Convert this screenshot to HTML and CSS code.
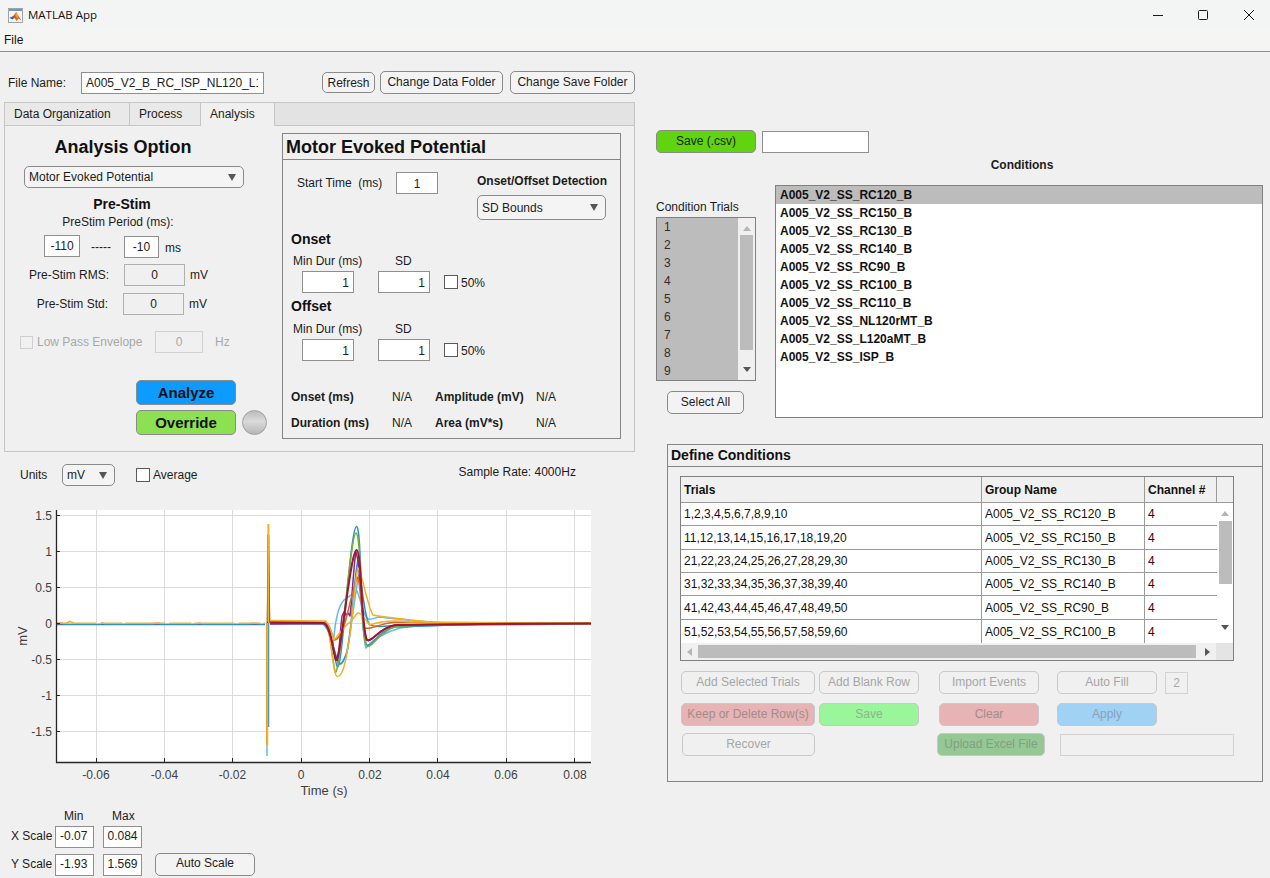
FILE: index.html
```html
<!DOCTYPE html>
<html lang="en">
<head>
<meta charset="utf-8">
<title>MATLAB App</title>
<link rel="stylesheet" href="styles.css">
</head>
<body>
<header class="titlebar">
  <svg class="app-icon" viewBox="0 0 15 15" aria-hidden="true">
    <rect x="0.5" y="0.5" width="14" height="14" fill="#f6f6f6" stroke="#a3a3a3"/>
    <rect x="1" y="1" width="13" height="2" fill="#6f97c2"/>
    <path d="M1.5 10 L5 8.2 L8.2 4 L10.5 8 L13.5 12.5 L10.5 10.6 L8.5 13 L6.5 9.8 Z" fill="#d9641e"/>
    <path d="M1.5 10 L5 8.2 L7 9.6 L4.6 11.4 Z" fill="#2f6fb5"/>
    <path d="M8.2 4 L10.5 8 L9.2 10.5 L7.4 7 Z" fill="#f2a33a"/>
  </svg>
  <span class="app-title">MATLAB App</span>
  <div class="win-controls">
    <svg class="win-min" viewBox="0 0 10 10" aria-hidden="true"><path d="M0 5.5H10" stroke="#1a1a1a" fill="none"/></svg>
    <svg class="win-max" viewBox="0 0 10 10" aria-hidden="true"><rect x="0.5" y="0.5" width="9" height="9" rx="1" stroke="#1a1a1a" fill="none"/></svg>
    <svg class="win-close" viewBox="0 0 10 10" aria-hidden="true"><path d="M0 0L10 10M10 0L0 10" stroke="#1a1a1a" fill="none"/></svg>
  </div>
</header>
<nav class="menubar"><span>File</span></nav>

<main class="main">
  <section class="left">
    <div class="file-row">
      <span class="file-label">File Name:</span>
      <div class="field file-field"><span class="clip">A005_V2_B_RC_ISP_NL120_L1</span></div>
      <button class="btn refresh">Refresh</button>
      <button class="btn lift data-folder">Change Data Folder</button>
      <button class="btn lift save-folder">Change Save Folder</button>
    </div>

    <div class="tabs">
      <div class="tab-strip">
        <span class="tab tab-data">Data Organization</span>
        <span class="tab tab-process">Process</span>
        <span class="tab tab-analysis">Analysis</span>
      </div>
      <div class="tab-body">
        <div class="analysis">
          <h2 class="analysis-title">Analysis Option</h2>
          <div class="select analysis-select"><span>Motor Evoked Potential</span><i class="caret"></i></div>
          <h3 class="prestim-title">Pre-Stim</h3>
          <div class="prestim-sub">PreStim Period (ms):</div>
          <div class="period-row">
            <div class="field center period-a">-110</div>
            <span class="dashes">-----</span>
            <div class="field center period-b">-10</div>
            <span class="unit-ms">ms</span>
          </div>
          <div class="stat-row rms-row">
            <span class="stat-label rms-label">Pre-Stim RMS:</span>
            <div class="field center muted stat-field">0</div>
            <span class="stat-unit">mV</span>
          </div>
          <div class="stat-row std-row">
            <span class="stat-label std-label">Pre-Stim Std:</span>
            <div class="field center muted stat-field">0</div>
            <span class="stat-unit">mV</span>
          </div>
          <div class="lowpass-row">
            <span class="check check-off"></span>
            <span class="lowpass-label">Low Pass Envelope</span>
            <div class="field center off lowpass-field">0</div>
            <span class="lowpass-unit">Hz</span>
          </div>
          <button class="btn action analyze">Analyze</button>
          <div class="override-row">
            <button class="btn action override">Override</button>
            <span class="lamp"></span>
          </div>
        </div>

        <div class="mep">
          <h2 class="mep-title">Motor Evoked Potential</h2>
          <div class="mep-top">
            <div class="start-col">
              <span class="start-label">Start Time&nbsp; (ms)</span>
              <div class="field center start-field">1</div>
            </div>
            <div class="detect-col">
              <div class="detect-label">Onset/Offset Detection</div>
              <div class="select detect-select"><span>SD Bounds</span><i class="caret"></i></div>
            </div>
          </div>
          <h3 class="block-title onset-title">Onset</h3>
          <div class="dur-labels onset-labels"><span class="dur-label">Min Dur (ms)</span><span>SD</span></div>
          <div class="dur-row">
            <div class="field num dur-field">1</div>
            <div class="field num sd-field">1</div>
            <span class="check pct-check"></span><span class="pct">50%</span>
          </div>
          <h3 class="block-title offset-title">Offset</h3>
          <div class="dur-labels offset-labels"><span class="dur-label">Min Dur (ms)</span><span>SD</span></div>
          <div class="dur-row">
            <div class="field num dur-field">1</div>
            <div class="field num sd-field">1</div>
            <span class="check pct-check"></span><span class="pct">50%</span>
          </div>
          <div class="results">
            <b>Onset (ms)</b><span>N/A</span><b>Amplitude (mV)</b><span>N/A</span>
            <b>Duration (ms)</b><span>N/A</span><b>Area (mV*s)</b><span>N/A</span>
          </div>
        </div>
      </div>
    </div>

    <div class="units-row">
      <span class="units-label">Units</span>
      <div class="select units-select"><span>mV</span><i class="caret"></i></div>
      <span class="check avg-check"></span><span class="avg-label">Average</span>
      <span class="rate">Sample Rate: 4000Hz</span>
    </div>

    <svg class="plot" viewBox="0 500 640 300" role="img" aria-label="Voltage against time plot">
      <rect x="56" y="510" width="535" height="252" fill="#fff"/>
      <g class="grid-lines">
        <path d="M96.5 510V762M164.5 510V762M232.5 510V762M301.5 510V762M369.5 510V762M437.5 510V762M506.5 510V762M574.5 510V762"/>
        <path d="M56 515.5H591M56 551.5H591M56 587.5H591M56 623.5H591M56 659.5H591M56 695.5H591M56 731.5H591"/>
      </g>
      <g class="traces">
        <path class="c-blue" d="M57 624.5H265"/>
        <path class="c-red dash-a" d="M57 623.6H265"/>
        <path class="c-yellow dash-b" d="M57 623.2H66L70 621.5L74 623.2H265"/>
        <path class="c-sky" d="M267 623V756"/>
        <path class="c-blue" d="M268.5 623V727"/>
        <path class="c-green" d="M267.5 623L268 535L269.5 623"/>
        <path class="c-red" d="M267.5 623L268.5 535L269.5 622"/>
        <path class="c-orange thick" d="M267 623V745"/>
        <path class="c-yellow thick" d="M267.2 623V745M268.4 524V622"/>

        <path class="c-sky" d="M270 623L322 624C328 625 331 640 333 645C335 625 337 607 344 600C348 596 353 595 357 591C361 600 363 616 368 619C372 620 376 617 380 617C395 619 420 622 470 624L591 623.5"/>
        <path class="c-sky" d="M270 624L322 624C330 626 333 648 337 660C340 668 343 662 346 655C351 635 355 590 359 575C362 600 362 635 366 648C372 640 385 632 400 628C420 625 450 625 591 624"/>
        <path class="c-blue" d="M270 622.5L322 622.5C330 623 332 650 337 666C342 680 350 527 356.5 526.5C362 526 360 640 367 645C372 648 378 630 395 627L480 624L591 623.5"/>
        <path class="c-blue" d="M270 623L323 623C330 626 332 645 338 662C341 668 344 660 347 652C352 630 354 575 358 560C362 585 364 615 369 624C374 628 385 626 400 625L591 624"/>
        <path class="c-green" d="M270 622L323 622C330 623 331 650 335 672C340 680 350 534 356 533C362 534 360 640 367 646C372 649 380 630 397 626L480 624L591 623"/>
        <path class="c-purple" d="M270 624L324 623.5C330 626 332 645 336 660C339 664 340 630 342 616L344 612L346 615L348 613L350 616C352 600 354 560 356 552C360 560 362 630 367 640C372 643 378 628 395 625L591 623.5"/>
        <path class="c-orange" d="M270 621.5L325 622C330 624 331 632 334 640C338 640 343 632 347 615C351 600 355 580 358 577C361 590 362 620 365 628C370 630 378 624 395 622L450 623L591 623.5"/>
        <path class="c-yellow" d="M270 620.5L326 621C330 628 331 655 335 672C336 678 339 678 342 672C346 665 347 650 350 635C353 610 356 572 358 568C362 572 367 605 373 615C380 617 392 617 410 620L440 623L591 623.5"/>
        <path class="c-yellow" d="M270 622L326 622C330 626 332 634 334 640C339 634 345 626 350 622C354 618 356 614 358 613C362 612 366 622 370 625C378 622 392 620 410 622L591 623.5"/>
        <path class="c-red thick" d="M270 622.5L324 623C330 625 332 645 336 660C340 665 350 552 356.5 550C362 550 361 632 367 640C372 643 378 628 396 625L480 624L591 623.5"/>
      </g>
      <path class="axis" d="M56.5 510V762.5H591"/>
      <path class="axis-ticks" d="M56.5 515.5H60M56.5 551.5H60M56.5 587.5H60M56.5 623.5H60M56.5 659.5H60M56.5 695.5H60M56.5 731.5H60M96.5 762V758M164.5 762V758M232.5 762V758M301.5 762V758M369.5 762V758M437.5 762V758M506.5 762V758M574.5 762V758"/>
      <g class="tick-y">
        <text x="52" y="519.5">1.5</text><text x="52" y="555.5">1</text><text x="52" y="591.5">0.5</text><text x="52" y="627.5">0</text><text x="52" y="663.5">-0.5</text><text x="52" y="699.5">-1</text><text x="52" y="735.5">-1.5</text>
      </g>
      <g class="tick-x">
        <text x="96" y="779">-0.06</text><text x="164.5" y="779">-0.04</text><text x="232.5" y="779">-0.02</text><text x="301" y="779">0</text><text x="370" y="779">0.02</text><text x="438" y="779">0.04</text><text x="506" y="779">0.06</text><text x="575" y="779">0.08</text>
      </g>
      <text class="ax-label" x="324" y="795">Time (s)</text>
      <text class="ax-label" transform="translate(26.5 636) rotate(-90)">mV</text>
    </svg>

    <div class="scale">
      <div class="scale-head"><span class="scale-min">Min</span><span class="scale-max">Max</span></div>
      <div class="scale-row x-row">
        <span class="scale-label">X Scale</span>
        <div class="field scale-field"><span class="clip">-0.071</span></div>
        <div class="field center scale-field scale-second">0.084</div>
      </div>
      <div class="scale-row y-row">
        <span class="scale-label">Y Scale</span>
        <div class="field scale-field"><span class="clip">-1.931</span></div>
        <div class="field center scale-field scale-second">1.569</div>
        <button class="btn auto-scale">Auto Scale</button>
      </div>
    </div>
  </section>

  <section class="right">
    <div class="save-row">
      <button class="btn lift save-csv">Save (.csv)</button>
      <div class="field save-field"></div>
    </div>
    <div class="cond-heading">Conditions</div>
    <div class="lists">
      <div class="trials-col">
        <div class="trials-label">Condition Trials</div>
        <div class="trials-list">
          <ul class="trials-items">
            <li>1</li><li>2</li><li>3</li><li>4</li><li>5</li><li>6</li><li>7</li><li>8</li><li>9</li>
          </ul>
          <div class="vscroll trials-scroll"><i class="arrow-up"></i><i class="thumb trials-thumb"></i><i class="arrow-down"></i></div>
        </div>
        <button class="btn lift select-all">Select All</button>
      </div>
      <ul class="cond-list">
        <li class="selected">A005_V2_SS_RC120_B</li>
        <li>A005_V2_SS_RC150_B</li>
        <li>A005_V2_SS_RC130_B</li>
        <li>A005_V2_SS_RC140_B</li>
        <li>A005_V2_SS_RC90_B</li>
        <li>A005_V2_SS_RC100_B</li>
        <li>A005_V2_SS_RC110_B</li>
        <li>A005_V2_SS_NL120rMT_B</li>
        <li>A005_V2_SS_L120aMT_B</li>
        <li>A005_V2_SS_ISP_B</li>
      </ul>
    </div>

    <div class="define">
      <h3 class="define-title">Define Conditions</h3>
      <div class="table-wrap">
        <table class="cond-table">
          <colgroup><col class="col-trials"><col class="col-group"><col class="col-chan"><col class="col-scroll"></colgroup>
          <thead>
            <tr><th>Trials</th><th>Group Name</th><th>Channel #</th><th class="th-blank"></th></tr>
          </thead>
          <tbody>
            <tr class="r23"><td>1,2,3,4,5,6,7,8,9,10</td><td>A005_V2_SS_RC120_B</td><td class="chan">4</td>
              <td class="scroll-cell" rowspan="6"><div class="vscroll table-scroll"><i class="arrow-up"></i><i class="thumb table-thumb"></i><i class="arrow-down"></i></div></td></tr>
            <tr class="r24"><td>11,12,13,14,15,16,17,18,19,20</td><td>A005_V2_SS_RC150_B</td><td class="chan">4</td></tr>
            <tr class="r23"><td>21,22,23,24,25,26,27,28,29,30</td><td>A005_V2_SS_RC130_B</td><td class="chan">4</td></tr>
            <tr class="r23"><td>31,32,33,34,35,36,37,38,39,40</td><td>A005_V2_SS_RC140_B</td><td class="chan">4</td></tr>
            <tr class="r24"><td>41,42,43,44,45,46,47,48,49,50</td><td>A005_V2_SS_RC90_B</td><td class="chan">4</td></tr>
            <tr class="r23 last"><td>51,52,53,54,55,56,57,58,59,60</td><td>A005_V2_SS_RC100_B</td><td class="chan">4</td></tr>
          </tbody>
        </table>
        <div class="hscroll"><i class="arrow-left"></i><i class="h-thumb"></i><i class="arrow-right"></i><i class="corner"></i></div>
      </div>
      <div class="act-row act-1">
        <button class="btn dis lift w-add">Add Selected Trials</button>
        <button class="btn dis lift w-100 gap-4">Add Blank Row</button>
        <button class="btn dis lift w-100 gap-20">Import Events</button>
        <button class="btn dis lift w-100 gap-18">Auto Fill</button>
        <div class="field center off fill-field">2</div>
      </div>
      <div class="act-row act-2">
        <button class="btn dis lift w-add red">Keep or Delete Row(s)</button>
        <button class="btn dis lift w-100 gap-4 lime">Save</button>
        <button class="btn dis lift w-100 gap-20 red">Clear</button>
        <button class="btn dis lift w-100 gap-18 sky">Apply</button>
      </div>
      <div class="act-row act-3">
        <button class="btn dis lift recover">Recover</button>
        <button class="btn dis lift upload">Upload Excel File</button>
        <div class="field off upload-field"></div>
      </div>
    </div>
  </section>
</main>
</body>
</html>
```

FILE: styles.css
```css
* { box-sizing: border-box; }
html, body { margin: 0; padding: 0; }
body {
  width: 1270px; height: 878px; overflow: hidden;
  background: #f0f0f0; color: #1c1c1c;
  font: 12px/16px "Liberation Sans", Arial, sans-serif;
}
h2, h3, ul { margin: 0; padding: 0; }
ul { list-style: none; }
i { display: block; }

/* window chrome */
.titlebar { height: 30px; display: flex; align-items: center; background: #f3f5f4; }
.app-icon { width: 15px; height: 15px; margin-left: 8px; }
.app-title { margin-left: 5px; color: #111; font-family: "Open Sans", "Liberation Sans", sans-serif; font-size: 11.5px; }
.win-controls { margin-left: auto; display: flex; align-items: center; }
.win-min, .win-max, .win-close { width: 10px; height: 10px; display: block; }
.win-min { margin-right: 35px; }
.win-max { margin-right: 36px; }
.win-close { margin-right: 16px; }
.menubar { height: 22px; padding-left: 4px; background: #f5f5f3; border-bottom: 1px solid #8c8c8c; line-height: 21px; color: #111; }

.main { display: flex; height: 826px; }
.left { width: 640px; flex: none; padding-top: 19px; }
.right { flex: 1; padding-top: 78px; }

/* generic widgets */
.field {
  height: 22px; background: #fff; border: 1px solid #8f8f8f; padding: 0 4px;
  line-height: 20px; white-space: nowrap; overflow: hidden; color: #222;
}
.field.center { text-align: center; padding: 0; }
.field.num { text-align: right; padding-right: 4px; line-height: 22px; }
.field.muted { background: #f0f0f0; border-color: #b0b0b0; }
.field.off { background: #f0f0f0; border-color: #d2d2d2; color: #a8a8a8; }
.clip { display: block; overflow: hidden; }
.btn {
  display: block; height: 23px; padding: 0; margin: 0; background: #f3f3f3; color: #1c1c1c;
  border: 1px solid #8a8a8a; border-radius: 5px; font: inherit; white-space: nowrap; overflow: hidden;
}
.btn.lift { padding-bottom: 2px; }
.select {
  height: 22px; display: flex; align-items: center; justify-content: space-between;
  background: #f4f4f4; border: 1px solid #8a8a8a; border-radius: 5px; padding: 0 7px 0 4px;
}
.caret { width: 0; height: 0; border-left: 4.5px solid transparent; border-right: 4.5px solid transparent; border-top: 7px solid #555; }
.check { display: block; flex: none; width: 14px; height: 14px; background: #fff; border: 1px solid #5a5a5a; }
.check-off { width: 13px; height: 13px; background: #f0f0f0; border-color: #cfcfcf; }

/* file row */
.file-row { display: flex; align-items: center; height: 23px; }
.file-label { margin-left: 8px; width: 73px; }
.file-field { width: 183px; padding: 0 3px 0 4px; }
.file-field .clip { width: 172px; }
.refresh { width: 53px; height: 21px; margin-left: 58px; }
.data-folder { width: 123px; margin-left: 5px; }
.save-folder { width: 125px; margin-left: 7px; }

/* tabs */
.tabs { margin: 8px 0 0 4px; width: 631px; height: 350px; border: 1px solid #c6c6c6; }
.tab-strip { display: flex; height: 23px; background: #e3e3e3; border-bottom: 1px solid #c6c6c6; }
.tab { line-height: 22px; padding-left: 9px; border-right: 1px solid #c6c6c6; background: #e9e9e9; }
.tab-data { width: 125px; }
.tab-process { width: 71px; }
.tab-analysis { width: 74px; background: #f0f0f0; height: 23px; }
.tab-body { display: flex; }

/* analysis column */
.analysis { width: 277px; flex: none; }
.analysis-title { margin-top: 10px; width: 236px; text-align: center; font-size: 18px; line-height: 22px; color: #111; }
.analysis-select { margin: 8px 0 0 19px; width: 220px; }
.prestim-title { margin-top: 8px; width: 234px; text-align: center; font-size: 14px; color: #111; }
.prestim-sub { margin-top: 2px; width: 226px; text-align: center; }
.period-row { margin-top: 5px; height: 23px; padding-left: 39px; display: flex; }
.period-a { width: 36px; }
.dashes { margin-left: 11px; width: 33px; line-height: 24px; }
.period-b { width: 35px; margin-top: 1px; }
.unit-ms { margin-left: 6px; line-height: 26px; }
.stat-row { display: flex; align-items: center; }
.rms-row { margin-top: 6px; }
.std-row { margin-top: 7px; }
.stat-label { text-align: right; }
.rms-label { width: 104px; margin-right: 15px; }
.std-label { width: 103px; margin-right: 15px; }
.stat-field { width: 61px; }
.stat-unit { margin-left: 5px; }
.lowpass-row { margin-top: 16px; padding-left: 15px; display: flex; align-items: center; color: #a8a8a8; }
.lowpass-label { margin-left: 4px; width: 118px; }
.lowpass-field { width: 48px; }
.lowpass-unit { margin-left: 12px; }
.action { width: 100px; height: 25px; font-size: 15px; font-weight: 700; color: #111; margin-left: 131px; }
.analyze { margin-top: 27px; background: #0d9bff; }
.override-row { margin-top: 5px; display: flex; }
.override { background: #8ee053; }
.lamp {
  margin-left: 6px; width: 25px; height: 25px; border-radius: 50%; border: 1px solid #a0a0a0;
  background: linear-gradient(#bcbcbc, #dadada 45%, #c4c4c4 80%, #b4b4b4);
}

/* MEP panel */
.mep { margin-top: 7px; width: 339px; height: 306px; border: 1px solid #858585; }
.mep-title { height: 26px; border-bottom: 1px solid #858585; padding-left: 3px; font-size: 18px; line-height: 26px; color: #111; }
.mep-top { display: flex; margin-top: 12px; height: 48px; }
.start-col { width: 194px; padding-left: 14px; display: flex; align-items: flex-start; }
.start-label { width: 99px; line-height: 23px; }
.start-field { width: 42px; line-height: 22px; }
.detect-label { height: 16px; line-height: 18px; font-weight: 700; white-space: nowrap; }
.detect-select { margin-top: 7px; width: 129px; height: 25px; line-height: 18px; }
.block-title { height: 16px; line-height: 18px; margin-left: 8px; font-size: 14px; color: #111; }
.onset-title { margin-top: 10px; }
.offset-title { margin-top: 4px; }
.dur-labels { display: flex; height: 16px; line-height: 18px; margin-left: 10px; }
.onset-labels { margin-top: 6px; }
.offset-labels { margin-top: 7px; }
.dur-label { width: 102px; }
.dur-row { display: flex; align-items: center; margin: 3px 0 0 19px; }
.dur-field, .sd-field { width: 52px; }
.sd-field { margin-left: 24px; }
.pct-check { margin-left: 14px; }
.pct { margin-left: 3px; height: 16px; line-height: 18px; }
.results {
  margin: 27px 0 0 8px; display: grid; row-gap: 10px; grid-auto-rows: 16px; line-height: 18px;
  grid-template-columns: 101px 43px 101px auto; white-space: nowrap;
}
.results b { font-weight: 700; }

/* units + plot */
.units-row { display: flex; align-items: center; height: 22px; margin-top: 12px; }
.units-label { margin-left: 20px; width: 42px; }
.units-select { width: 53px; }
.avg-check { margin-left: 21px; }
.avg-label { margin-left: 3px; }
.rate { margin-left: 261px; align-self: flex-start; }
.plot { display: block; width: 640px; height: 300px; margin-top: 14px; }
.grid-lines path { stroke: #dcdcdc; stroke-width: 1; fill: none; }
.traces path { fill: none; stroke-width: 1.5; stroke-linejoin: round; }
.traces .thick { stroke-width: 2; }
.c-blue { stroke: #2b8fd2; }
.c-sky { stroke: #58bdf0; }
.c-orange { stroke: #d9651f; }
.c-yellow { stroke: #efb02a; }
.c-purple { stroke: #7e2f8e; }
.c-green { stroke: #77b030; }
.c-red { stroke: #a2142f; }
.dash-a { stroke-dasharray: 6 38 3 50; }
.dash-b { stroke-dasharray: 40 4 22 3; }
.axis { fill: none; stroke: #262626; stroke-width: 1.3; }
.axis-ticks { fill: none; stroke: #262626; stroke-width: 1; }
.tick-y text, .tick-x text { font-size: 12px; fill: #404040; }
.tick-y text { text-anchor: end; }
.tick-x text { text-anchor: middle; }
.ax-label { font-size: 13px; fill: #404040; text-anchor: middle; }

/* scale controls */
.scale { margin-top: 8px; }
.scale-head { display: flex; height: 16px; }
.scale-min { margin-left: 64px; width: 48px; }
.scale-row { display: flex; align-items: center; }
.x-row { margin-top: 2px; }
.y-row { margin-top: 5px; }
.scale-label { margin-left: 11px; width: 44px; margin-bottom: 2px; }
.scale-field { width: 39px; line-height: 19px; }
.scale-field .clip { width: 28px; }
.scale-second { margin-left: 9px; }
.auto-scale { width: 100px; margin-left: 13px; padding-bottom: 3px; }

/* right column */
.save-row { display: flex; padding-left: 16px; }
.save-csv { width: 100px; background: #5fd40f; }
.save-field { width: 107px; margin: 1px 0 0 6px; }
.cond-heading { margin: 4px 0 0 141px; width: 482px; text-align: center; font-weight: 700; }
.lists { display: flex; margin: 12px 0 0 16px; }
.trials-col { width: 100px; padding-top: 14px; }
.trials-list { margin-top: 2px; width: 100px; height: 164px; border: 1px solid #808080; display: flex; }
.trials-items { flex: 1; background: #bcbcbc; padding-left: 7px; }
.trials-items li { height: 18px; line-height: 18px; color: #3a2a2a; }
.vscroll { flex: none; display: flex; flex-direction: column; align-items: center; background: #f0f0f0; }
.trials-scroll { width: 17px; padding-top: 8px; }
.arrow-up { width: 0; height: 0; border-left: 4px solid transparent; border-right: 4px solid transparent; border-bottom: 5px solid #b5b5b5; }
.arrow-down { width: 0; height: 0; border-left: 4px solid transparent; border-right: 4px solid transparent; border-top: 5px solid #555; }
.thumb { background: #bcbcbc; width: 13px; }
.trials-thumb { height: 115px; margin: 4px 0 17px; }
.select-all { margin: 10px 0 0 11px; width: 77px; }
.cond-list { margin-left: 19px; width: 488px; height: 233px; background: #fff; border: 1px solid #808080; font-weight: 700; color: #111; }
.cond-list li { height: 18px; line-height: 18px; padding-left: 4px; }
.cond-list .selected { background: #bcbcbc; }

/* define conditions */
.define { margin: 26px 0 0 27px; width: 596px; height: 338px; border: 1px solid #858585; }
.define-title { height: 22px; padding-left: 3px; border-bottom: 1px solid #858585; font-size: 14px; line-height: 20px; color: #111; }
.table-wrap { margin: 9px 0 0 12px; width: 554px; height: 185px; border: 1px solid #808080; background: #fff; }
.cond-table { width: 552px; table-layout: fixed; border-collapse: separate; border-spacing: 0; }
.col-trials { width: 301px; }
.col-group { width: 163px; }
.col-chan { width: 72px; }
.col-scroll { width: 16px; }
.cond-table th { height: 26px; padding: 0 0 0 3px; text-align: left; background: #f0f0f0; border-right: 1px solid #9a9a9a; border-bottom: 1px solid #9a9a9a; color: #111; white-space: nowrap; }
.cond-table .th-blank { border-right: 0; padding: 0; }
.cond-table td { padding: 0 0 0 3px; border-right: 1px solid #9a9a9a; border-bottom: 1px solid #9a9a9a; color: #111; white-space: nowrap; }
.cond-table .chan { border-right: 0; color: #400; }
.cond-table .last td { border-bottom: 0; }
.cond-table .scroll-cell { padding: 0; border: 0; vertical-align: top; }
.r23 td { height: 23px; }
.r24 td { height: 24px; }
.table-scroll { height: 140px; width: 16px; padding-top: 8px; background: #fff; }
.table-thumb { height: 63px; margin: 5px 0 41px; }
.hscroll { height: 17px; display: flex; align-items: center; background: #f0f0f0; }
.arrow-left { margin-left: 6px; width: 0; height: 0; border-top: 4px solid transparent; border-bottom: 4px solid transparent; border-right: 5px solid #b5b5b5; }
.h-thumb { margin-left: 6px; width: 498px; height: 13px; background: #bcbcbc; }
.arrow-right { margin-left: 9px; width: 0; height: 0; border-top: 4px solid transparent; border-bottom: 4px solid transparent; border-left: 5px solid #555; }
.corner { margin-left: auto; width: 17px; height: 17px; background: #e4e4e4; }
.act-row { display: flex; }
.act-1 { margin: 10px 0 0 13px; }
.act-2 { margin: 9px 0 0 13px; }
.act-3 { margin: 7px 0 0 14px; }
.btn.dis { background: #f0f0f0; border-color: #c8c8c8; color: #a6a6a6; }
.w-add { width: 134px; }
.w-100 { width: 100px; }
.gap-4 { margin-left: 4px; }
.gap-20 { margin-left: 20px; }
.gap-18 { margin-left: 18px; }
.fill-field { width: 23px; margin: 1px 0 0 8px; }
.btn.red { background: #e6b4b4; color: #a08c8c; }
.btn.lime { background: #9bf59b; color: #8cb48c; }
.btn.sky { background: #a0d2f5; color: #8ca0b4; }
.recover { width: 133px; }
.btn.upload { width: 108px; margin-left: 122px; background: #96c896; color: #80a080; }
.upload-field { width: 174px; margin: 1px 0 0 15px; }
```
